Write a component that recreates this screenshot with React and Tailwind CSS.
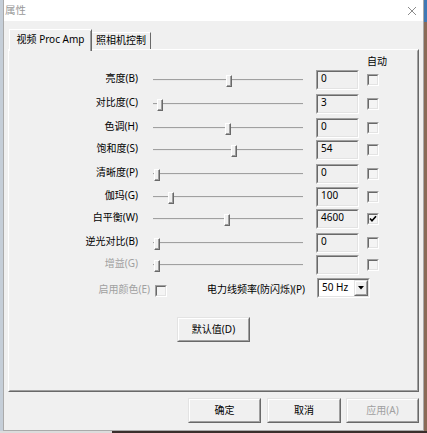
import React from 'react';

const rows = [
  { label: '亮度(B)', v: '0', t: 73, h: 'h-[24px]' },
  { label: '对比度(C)', v: '3', t: 4, h: 'h-[24px]' },
  { label: '色调(H)', v: '0', t: 72, h: 'h-[22px]' },
  { label: '饱和度(S)', v: '54', t: 78, h: 'h-[24px]' },
  { label: '清晰度(P)', v: '0', t: 1, h: 'h-[23px]' },
  { label: '伽玛(G)', v: '100', t: 15, h: 'h-[22px]' },
  { label: '白平衡(W)', v: '4600', t: 71, h: 'h-[24px]', checked: true },
  { label: '逆光对比(B)', v: '0', t: 1, h: 'h-[22px]' },
  { label: '增益(G)', v: '', t: 1, h: 'h-[23px]', disabled: true },
];

function Sunken({ className = '', inner = '', children }) {
  return (
    <div className={`border border-t-[#a0a0a0] border-l-[#a0a0a0] border-r-white border-b-white ${className}`}>
      <div className={`h-full border border-t-[#696969] border-l-[#696969] border-r-[#e3e3e3] border-b-[#e3e3e3] ${inner}`}>
        {children}
      </div>
    </div>
  );
}

function Raised({ className = '', inner = '', children }) {
  return (
    <div className={`border border-t-[#e3e3e3] border-l-[#e3e3e3] border-r-[#696969] border-b-[#696969] bg-[#f0f0f0] ${className}`}>
      <div className={`h-full border border-t-white border-l-white border-r-[#a0a0a0] border-b-[#a0a0a0] ${inner}`}>
        {children}
      </div>
    </div>
  );
}

function Check({ checked, className = '' }) {
  return (
    <Sunken className={`w-[12px] h-[12px] shrink-0 ${className}`} inner="bg-[#f4f4f4] flex items-center justify-center">
      {checked && (
        <svg width="8" height="8" viewBox="0 0 8 8">
          <path d="M1 3.5 L3 5.8 L7 1.2" stroke="#000" strokeWidth="1.6" fill="none" />
        </svg>
      )}
    </Sunken>
  );
}

function Slider({ t }) {
  return (
    <div className="relative ml-[15px] w-[150px] h-[20px] shrink-0">
      <div className="mt-[9px] h-[2px] bg-[#a0a0a0] border-b border-b-[#e8e8e8]" />
      <div className="absolute top-[5px]" style={{ left: t }}>
        <div className="w-[6px] h-[12px] border border-t-white border-l-white border-r-[#696969] border-b-[#696969] bg-[#f0f0f0]">
          <div className="h-full border-r border-b border-r-[#a0a0a0] border-b-[#a0a0a0]" />
        </div>
      </div>
    </div>
  );
}

function Button({ children, className = '', disabled }) {
  return (
    <Raised className={className} inner={`flex items-center justify-center pb-[1px] ${disabled ? 'text-[#a0a0a0]' : 'text-black'}`}>
      {children}
    </Raised>
  );
}

export default function App() {
  return (
    <div className="w-[427px] h-[433px] flex flex-col overflow-hidden font-['Noto_Sans','Noto_Sans_CJK_SC',sans-serif] text-[10px] text-black select-none">
      <div className="flex h-[431px]">
        <div className="w-[3px] bg-[#c5ced8]" />
        <div className="w-[421px] flex flex-col border-l border-r border-b border-[#aaaaaa] bg-[#f0f0f0]">
          <div className="h-[21px] bg-white flex items-center justify-between pl-[1px] shrink-0">
            <span className="text-[10.5px] text-[#999999] leading-none">属性</span>
            <svg width="10" height="10" viewBox="0 0 10 10" className="mr-[6px]">
              <path d="M1 1 L9 9 M9 1 L1 9" stroke="#8c8c8c" strokeWidth="1" />
            </svg>
          </div>
          <div className="flex flex-col pl-[4px] pr-[4px] pt-[8px]">
            <div className="h-[20px] flex items-end">
              <div className="relative z-10 ml-[1px] w-[83px] h-[22px] mb-[-2px] bg-[#f0f0f0] border-t border-l border-t-white border-l-white border-r border-r-[#696969] flex items-center justify-center pb-[2px]">
                <span className="border-r border-r-[#a0a0a0] absolute right-0 top-[1px] bottom-0" />
                视频 Proc Amp
              </div>
              <div className="w-[59px] h-[17px] border-t border-t-white border-r border-r-[#696969] flex items-center justify-center pb-[1px]">
                照相机控制
              </div>
            </div>
            <div className="w-[411px] h-[343px] border border-t-white border-l-white border-r-[#696969] border-b-[#696969]">
              <div className="h-full border border-t-[#f0f0f0] border-l-[#f0f0f0] border-r-[#a0a0a0] border-b-[#a0a0a0] flex flex-col">
                <div className="h-[19px] flex items-center pl-[357px] pt-[1px]">自动</div>
                {rows.map((r) => (
                  <div key={r.label} className={`flex items-start shrink-0 ${r.h}`}>
                    <div className={`w-[128px] h-[20px] flex items-center justify-end pb-[3px] shrink-0 ${r.disabled ? 'text-[#a0a0a0]' : ''}`}>
                      {r.label}
                    </div>
                    <Slider t={r.t} />
                    <Sunken className="ml-[13px] w-[43px] h-[20px] shrink-0" inner="flex items-center pl-[3px] pb-[3px]">
                      {r.v}
                    </Sunken>
                    <Check checked={r.checked} className="ml-[8px] mt-[4px]" />
                  </div>
                ))}
                <div className="flex items-start h-[20px] shrink-0">
                  <div className="w-[140px] h-[20px] flex items-center justify-end pt-[2px] text-[#a0a0a0] shrink-0">启用颜色(E)</div>
                  <Check className="ml-[5px] mt-[7px]" />
                  <div className="w-[138px] h-[20px] flex items-center justify-end pt-[3px] shrink-0">电力线频率(防闪烁)(P)</div>
                  <Sunken className="ml-[12px] w-[53px] h-[20px] shrink-0" inner="bg-white flex items-stretch">
                    <div className="flex-1 flex items-center pl-[3px] pb-[1px]">50 Hz</div>
                    <Raised className="w-[14px]" inner="flex items-center justify-center">
                      <svg width="6" height="4" viewBox="0 0 6 4">
                        <path d="M0 0 L6 0 L3 3.5 Z" fill="#000" />
                      </svg>
                    </Raised>
                  </Sunken>
                </div>
                <div className="flex justify-center mt-[19px]">
                  <Button className="w-[73px] h-[25px]">默认值(D)</Button>
                </div>
              </div>
            </div>
            <div className="flex justify-end gap-[6px] mt-[6px] pr-[0px]">
              <Button className="w-[73px] h-[25px]">确定</Button>
              <Button className="w-[74px] h-[25px]">取消</Button>
              <Button className="w-[73px] h-[25px] -ml-[1px]" disabled>应用(A)</Button>
            </div>
          </div>
        </div>
        <div className="flex-1 flex flex-col">
          <div className="h-[22px] bg-[#3f78b5]" />
          <div className="flex-1 bg-[#8a6b57]" />
        </div>
      </div>
      <div className="flex h-[2px]">
        <div className="w-[112px] bg-[#dcdcdc]" />
        <div className="flex-1 bg-[#3a2f2c]" />
      </div>
    </div>
  );
}
